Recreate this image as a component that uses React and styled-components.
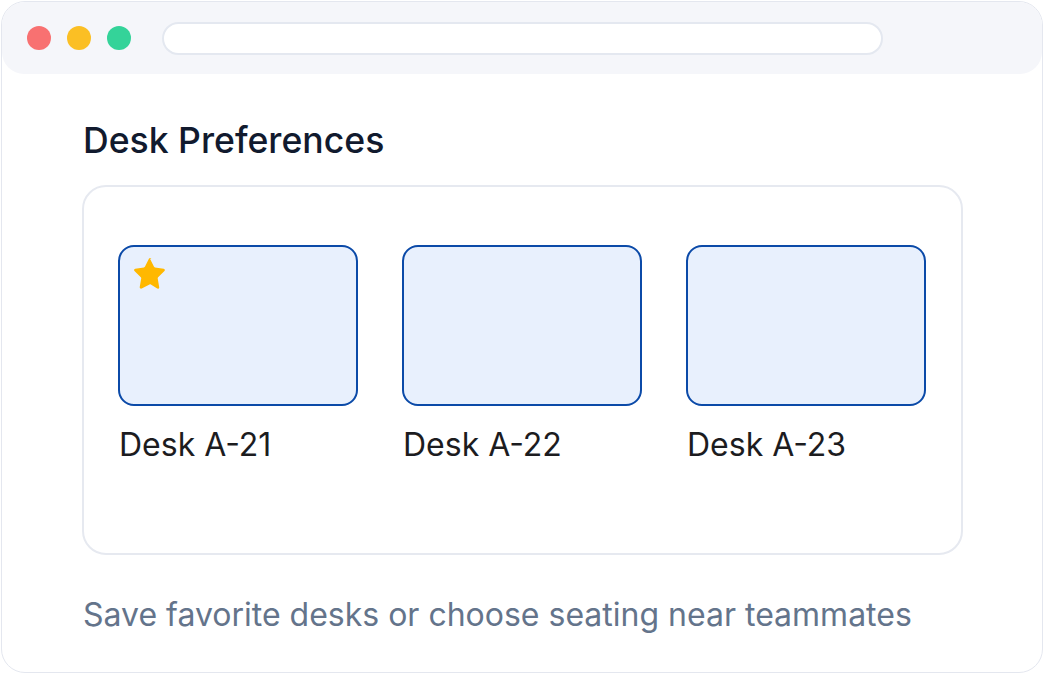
import styled, { createGlobalStyle } from 'styled-components';

const Global = createGlobalStyle`
  html, body {
    margin: 0;
    padding: 0;
    background: #ffffff;
  }
  body {
    font-family: Inter, "Noto Sans", sans-serif;
  }
`;

const Frame = styled.div`
  box-sizing: border-box;
  width: 1042px;
  height: 672px;
  margin: 1px 0 0 1px;
  border: 1.5px solid #e4e7ef;
  border-radius: 24px;
  background: #ffffff;
  display: flex;
  flex-direction: column;
  overflow: hidden;
`;

const TopBar = styled.div`
  height: 72px;
  flex-shrink: 0;
  background: #f5f6fa;
  border-radius: 22px;
  display: flex;
  align-items: center;
  padding-left: 25px;
  gap: 16px;
`;

const Dot = styled.span`
  width: 24px;
  height: 24px;
  border-radius: 50%;
  background: ${(p) => p.color};
`;

const UrlBar = styled.div`
  box-sizing: border-box;
  width: 721px;
  height: 33px;
  margin-left: 15px;
  background: #ffffff;
  border: 2px solid #e4e8f0;
  border-radius: 17px;
`;

const Body = styled.div`
  padding: 45px 80px 0 80px;
  display: flex;
  flex-direction: column;
`;

const Title = styled.h1`
  margin: 0 0 0 1px;
  font-size: 35.6px;
  font-weight: 500;
  color: #111a2e;
  line-height: 44px;
`;

const Card = styled.div`
  box-sizing: border-box;
  margin-top: 22px;
  width: 881px;
  height: 370px;
  border: 2px solid #e6e9f0;
  border-radius: 24px;
  padding: 58px 34px 0;
  display: flex;
  gap: 44px;
`;

const Desk = styled.div`
  display: flex;
  flex-direction: column;
  gap: 19px;
`;

const Tile = styled.div`
  position: relative;
  box-sizing: border-box;
  width: 240px;
  height: 161px;
  border: 2px solid #0b4aa8;
  border-radius: 16px;
  background: #e8f0fd;
`;

const Star = styled.svg`
  position: absolute;
  left: 13px;
  top: 8px;
  width: 34px;
  height: 34px;
`;

const Label = styled.div`
  font-size: 32px;
  font-weight: 400;
  color: #1c1c1f;
  line-height: 40px;
  padding-left: 1px;
`;

const Caption = styled.p`
  margin: 40px 0 0 1px;
  font-size: 32px;
  font-weight: 400;
  color: #64748b;
  line-height: 40px;
`;

function StarIcon() {
  return (
    <Star viewBox="0 0 24 24">
      <path
        d="M12 2.6l2.75 5.6c.14.29.42.49.74.54l6.17.9c.8.12 1.12 1.1.54 1.66l-4.47 4.36c-.23.22-.34.55-.28.87l1.05 6.15c.14.8-.7 1.4-1.41 1.03L12.6 20.8c-.29-.15-.63-.15-.92 0l-5.53 2.9c-.72.38-1.55-.23-1.41-1.03l1.05-6.15c.06-.32-.05-.65-.28-.87L1.04 11.3c-.58-.57-.26-1.55.54-1.66l6.17-.9c.32-.05.6-.25.74-.54L11.24 2.6c.36-.72 1.4-.72 1.76 0z"
        fill="#ffb800"
      />
    </Star>
  );
}

const desks = [
  { id: 'A-21', fav: true },
  { id: 'A-22', fav: false },
  { id: 'A-23', fav: false },
];

export default function App() {
  return (
    <>
      <Global />
      <Frame>
        <TopBar>
          <Dot color="#f87171" />
          <Dot color="#fbbf24" />
          <Dot color="#34d399" />
          <UrlBar />
        </TopBar>
        <Body>
          <Title>Desk Preferences</Title>
          <Card>
            {desks.map((d) => (
              <Desk key={d.id}>
                <Tile>{d.fav && <StarIcon />}</Tile>
                <Label>Desk {d.id}</Label>
              </Desk>
            ))}
          </Card>
          <Caption>Save favorite desks or choose seating near teammates</Caption>
        </Body>
      </Frame>
    </>
  );
}
